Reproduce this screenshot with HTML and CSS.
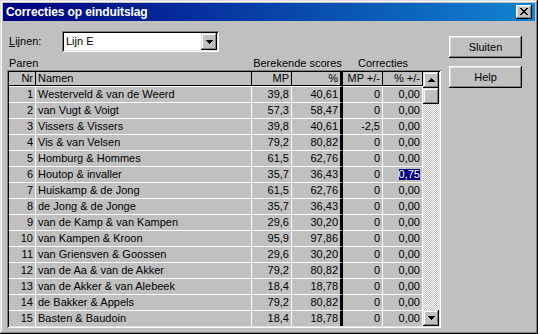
FILE: index.html
```html
<!DOCTYPE html>
<html>
<head>
<meta charset="utf-8">
<link rel="stylesheet" href="styles.css">
</head>
<body>
<div class="window">
  <div class="titlebar">
    <span class="title">Correcties op einduitslag</span>
    <span class="close">
      <svg width="8" height="7" viewBox="0 0 8 7" shape-rendering="crispEdges"><path d="M0 0h2v1H0zM6 0h2v1H6zM1 1h2v1H1zM5 1h2v1H5zM2 2h4v1H2zM3 3h2v1H3zM2 4h4v1H2zM1 5h2v1H1zM5 5h2v1H5zM0 6h2v1H0zM6 6h2v1H6z" fill="#000"/></svg>
    </span>
  </div>
  <div class="body">
    <div class="left">
      <div class="lijnen-row">
        <span class="lbl"><u>L</u>ijnen:</span>
        <div class="combo">
          <span class="combo-text">Lijn E</span>
          <span class="combo-btn"><svg width="7" height="4" viewBox="0 0 7 4" shape-rendering="crispEdges"><path d="M0 0h7v1H0zM1 1h5v1H1zM2 2h3v1H2zM3 3h1v1H3z" fill="#000"/></svg></span>
        </div>
      </div>
      <div class="group-labels">
        <span class="gl-paren">Paren</span>
        <span class="gl-scores">Berekende scores</span>
        <span class="gl-corr">Correcties</span>
      </div>
      <div class="grid-box">
        <div class="table">
          <div class="row head">
            <span class="cell num">Nr</span><span class="cell">Namen</span><span class="cell num">MP</span><span class="cell num c4">%</span><span class="cell num">MP +/-</span><span class="cell num">% +/-</span>
          </div>
          <div class="row data"><span class="cell num">1</span><span class="cell">Westerveld &amp; van de Weerd</span><span class="cell num">39,8</span><span class="cell num c4">40,61</span><span class="cell num">0</span><span class="cell num">0,00</span></div>
          <div class="row data"><span class="cell num">2</span><span class="cell">van Vugt &amp; Voigt</span><span class="cell num">57,3</span><span class="cell num c4">58,47</span><span class="cell num">0</span><span class="cell num">0,00</span></div>
          <div class="row data"><span class="cell num">3</span><span class="cell">Vissers &amp; Vissers</span><span class="cell num">39,8</span><span class="cell num c4">40,61</span><span class="cell num">-2,5</span><span class="cell num">0,00</span></div>
          <div class="row data"><span class="cell num">4</span><span class="cell">Vis &amp; van Velsen</span><span class="cell num">79,2</span><span class="cell num c4">80,82</span><span class="cell num">0</span><span class="cell num">0,00</span></div>
          <div class="row data"><span class="cell num">5</span><span class="cell">Homburg &amp; Hommes</span><span class="cell num">61,5</span><span class="cell num c4">62,76</span><span class="cell num">0</span><span class="cell num">0,00</span></div>
          <div class="row data"><span class="cell num">6</span><span class="cell">Houtop &amp; invaller</span><span class="cell num">35,7</span><span class="cell num c4">36,43</span><span class="cell num">0</span><span class="cell num"><span class="sel">0,75</span></span></div>
          <div class="row data"><span class="cell num">7</span><span class="cell">Huiskamp &amp; de Jong</span><span class="cell num">61,5</span><span class="cell num c4">62,76</span><span class="cell num">0</span><span class="cell num">0,00</span></div>
          <div class="row data"><span class="cell num">8</span><span class="cell">de Jong &amp; de Jonge</span><span class="cell num">35,7</span><span class="cell num c4">36,43</span><span class="cell num">0</span><span class="cell num">0,00</span></div>
          <div class="row data"><span class="cell num">9</span><span class="cell">van de Kamp &amp; van Kampen</span><span class="cell num">29,6</span><span class="cell num c4">30,20</span><span class="cell num">0</span><span class="cell num">0,00</span></div>
          <div class="row data"><span class="cell num">10</span><span class="cell">van Kampen &amp; Kroon</span><span class="cell num">95,9</span><span class="cell num c4">97,86</span><span class="cell num">0</span><span class="cell num">0,00</span></div>
          <div class="row data"><span class="cell num">11</span><span class="cell">van Griensven &amp; Goossen</span><span class="cell num">29,6</span><span class="cell num c4">30,20</span><span class="cell num">0</span><span class="cell num">0,00</span></div>
          <div class="row data"><span class="cell num">12</span><span class="cell">van de Aa &amp; van de Akker</span><span class="cell num">79,2</span><span class="cell num c4">80,82</span><span class="cell num">0</span><span class="cell num">0,00</span></div>
          <div class="row data"><span class="cell num">13</span><span class="cell">van de Akker &amp; van Alebeek</span><span class="cell num">18,4</span><span class="cell num c4">18,78</span><span class="cell num">0</span><span class="cell num">0,00</span></div>
          <div class="row data"><span class="cell num">14</span><span class="cell">de Bakker &amp; Appels</span><span class="cell num">79,2</span><span class="cell num c4">80,82</span><span class="cell num">0</span><span class="cell num">0,00</span></div>
          <div class="row data"><span class="cell num">15</span><span class="cell">Basten &amp; Baudoin</span><span class="cell num">18,4</span><span class="cell num c4">18,78</span><span class="cell num">0</span><span class="cell num">0,00</span></div>
        </div>
        <div class="vscroll">
          <span class="sb-btn"><svg width="7" height="4" viewBox="0 0 7 4" shape-rendering="crispEdges"><path d="M3 0h1v1H3zM2 1h3v1H2zM1 2h5v1H1zM0 3h7v1H0z" fill="#000"/></svg></span>
          <span class="sb-thumb"></span>
          <span class="sb-trough"></span>
          <span class="sb-btn"><svg width="7" height="4" viewBox="0 0 7 4" shape-rendering="crispEdges"><path d="M0 0h7v1H0zM1 1h5v1H1zM2 2h3v1H2zM3 3h1v1H3z" fill="#000"/></svg></span>
        </div>
      </div>
    </div>
    <div class="right">
      <button class="btn">Sluiten</button>
      <button class="btn">Help</button>
    </div>
  </div>
</div>
</body>
</html>
```

FILE: styles.css
```css
* { box-sizing: border-box; }
html, body { margin: 0; padding: 0; }
body {
  width: 538px;
  height: 334px;
  overflow: hidden;
  background: #c0c0c0;
  font-family: "Liberation Sans", Arial, sans-serif;
  font-size: 11px;
  color: #000;
}
.window {
  width: 538px;
  height: 334px;
  padding: 3px;
  background: #c0c0c0;
  box-shadow: inset -1px -1px #000, inset 1px 1px #dfdfdf, inset -2px -2px #808080, inset 2px 2px #fff;
  display: flex;
  flex-direction: column;
}
.titlebar {
  height: 18px;
  flex: none;
  display: flex;
  align-items: center;
  justify-content: space-between;
  padding: 0 3px 0 3px;
  background: linear-gradient(90deg, #000080, #1084d0);
}
.title {
  color: #fff;
  font-weight: bold;
  font-size: 12px;
  line-height: 18px;
  letter-spacing: -0.1px;
}
.close {
  width: 16px;
  height: 14px;
  background: #c0c0c0;
  box-shadow: inset -1px -1px #000, inset 1px 1px #fff, inset -2px -2px #808080, inset 2px 2px #dfdfdf;
  display: flex;
  align-items: flex-start;
  padding: 3px 0 0 4px;
}
.close svg, .combo-btn svg, .sb-btn svg { display: block; }
.body {
  flex: 1;
  display: flex;
  padding-left: 4px;
}
.left {
  width: 434px;
  display: flex;
  flex-direction: column;
}
.lijnen-row {
  display: flex;
  align-items: center;
  height: 21px;
  margin-top: 10px;
  padding-left: 2px;
}
.lbl {
  width: 53px;
  line-height: 13px;
}
.combo {
  width: 157px;
  height: 21px;
  background: #fff;
  padding: 2px;
  display: flex;
  box-shadow: inset 1px 1px #808080, inset -1px -1px #fff, inset 2px 2px #000, inset -2px -2px #dfdfdf;
}
.combo-text {
  flex: 1;
  padding-left: 2px;
  line-height: 17px;
}
.combo-btn {
  width: 16px;
  height: 17px;
  background: #c0c0c0;
  box-shadow: inset -1px -1px #000, inset 1px 1px #dfdfdf, inset -2px -2px #808080, inset 2px 2px #fff;
  display: flex;
  align-items: center;
  justify-content: center;
}
.group-labels {
  height: 18px;
  display: grid;
  grid-template-columns: 27px 216px 40px 51px 40px 40px;
  align-items: end;
  padding-left: 2px;
  line-height: 13px;
}
.gl-paren { grid-column: 1 / 3; }
.gl-scores { grid-column: 3 / 5; text-align: center; }
.gl-corr { grid-column: 5 / 7; text-align: center; }
.grid-box {
  width: 434px;
  height: 258px;
  padding: 2px;
  display: flex;
  box-shadow: inset 1px 1px #808080, inset -1px -1px #fff, inset 2px 2px #000, inset -2px -2px #dfdfdf;
}
.table { width: 414px; }
.row {
  display: grid;
  grid-template-columns: 27px 216px 40px 51px 40px 40px;
}
.cell {
  padding: 0 2px;
  white-space: nowrap;
  overflow: hidden;
}
.num { text-align: right; }
.head .cell {
  height: 14px;
  line-height: 13px;
  border-right: 1px solid #000;
  border-bottom: 1px solid #000;
}
.data .cell {
  height: 16px;
  line-height: 15px;
  border-top: 1px solid #fff;
  border-right: 1px solid #fff;
}
.row .c4 { border-right: 3px solid #000; }
.sel {
  display: inline-block;
  line-height: 11px;
  background: #000080;
  color: #fff;
}
.vscroll {
  width: 16px;
  display: flex;
  flex-direction: column;
}
.sb-btn, .sb-thumb {
  height: 16px;
  flex: none;
  background: #c0c0c0;
  box-shadow: inset -1px -1px #000, inset 1px 1px #dfdfdf, inset -2px -2px #808080, inset 2px 2px #fff;
}
.sb-btn {
  display: flex;
  align-items: center;
  justify-content: center;
}
.sb-trough {
  flex: 1;
  background: repeating-conic-gradient(#fff 0 25%, #c0c0c0 0 50%) 0 0 / 2px 2px;
}
.right {
  display: flex;
  flex-direction: column;
  gap: 8px;
  padding-top: 15px;
  margin-left: 8px;
}
.btn {
  width: 73px;
  height: 22px;
  border: 0;
  padding: 0;
  background: #c0c0c0;
  font-family: "Liberation Sans", Arial, sans-serif;
  font-size: 11px;
  color: #000;
  box-shadow: inset -1px -1px #000, inset 1px 1px #fff, inset -2px -2px #808080, inset 2px 2px #dfdfdf;
}
```
